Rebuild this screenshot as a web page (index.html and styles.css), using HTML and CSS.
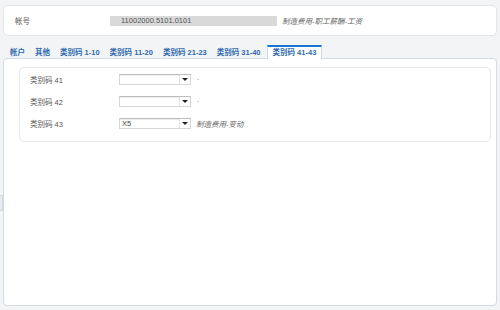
FILE: index.html
```html
<!DOCTYPE html>
<html lang="zh">
<head>
<meta charset="utf-8">
<title>帐号</title>
<link rel="stylesheet" href="styles.css">
</head>
<body>
<div class="page">
  <div class="card">
    <span class="card-label">帐号</span>
    <span class="ro-input">11002000.5101.0101</span>
    <span class="desc">制造费用-职工薪酬-工资</span>
  </div>

  <div class="tabs">
    <span class="tab">帐户</span>
    <span class="tab">其他</span>
    <span class="tab">类别码 1-10</span>
    <span class="tab">类别码 11-20</span>
    <span class="tab">类别码 21-23</span>
    <span class="tab">类别码 31-40</span>
    <span class="tab active">类别码 41-43</span>
  </div>

  <div class="panel">
    <div class="fieldset">
      <div class="row">
        <span class="row-label">类别码 41</span>
        <span class="select"><span class="select-val"></span><span class="select-btn"><span class="caret"></span></span></span>
        <span class="note">·</span>
      </div>
      <div class="row">
        <span class="row-label">类别码 42</span>
        <span class="select"><span class="select-val"></span><span class="select-btn"><span class="caret"></span></span></span>
        <span class="note">·</span>
      </div>
      <div class="row">
        <span class="row-label">类别码 43</span>
        <span class="select"><span class="select-val">X5</span><span class="select-btn"><span class="caret"></span></span></span>
        <span class="desc">制造费用-变动</span>
      </div>
    </div>
  </div>
  <span class="handle"></span>
</div>
</body>
</html>
```

FILE: styles.css
```css
html, body {
  margin: 0;
  padding: 0;
  background: #f3f4f6;
  font-family: "Liberation Sans", Arial, "Noto Sans CJK SC", sans-serif;
  font-size: 7.5px;
  color: #555;
}
.page {
  position: relative;
  width: 494px;
  height: 310px;
  padding: 5px 3px 0;
}
.card {
  box-sizing: border-box;
  height: 31px;
  background: #fff;
  border: 1px solid #e2e5ea;
  border-radius: 5px;
  display: flex;
  align-items: center;
  padding-left: 11px;
}
.card-label {
  width: 95px;
  color: #555;
}
.ro-input {
  box-sizing: border-box;
  width: 167px;
  height: 10px;
  line-height: 10px;
  background: #d9d9d9;
  padding-left: 11px;
  color: #555;
}
.desc {
  font-style: italic;
  color: #666;
  margin-left: 5px;
}
.tabs {
  display: flex;
  margin-top: 9px;
  padding-left: 2px;
  align-items: flex-end;
}
.tab {
  padding: 0 4px;
  height: 11px;
  line-height: 12px;
  font-weight: bold;
  color: #2f6aae;
  border: 1px solid transparent;
  border-top-width: 2px;
  border-bottom: 0;
  white-space: nowrap;
}
.tab.active {
  padding: 0 5px;
  background: #fff;
  border-color: #cfd8e4;
  border-top-color: #1777d6;
  position: relative;
  z-index: 1;
  margin-bottom: -1px;
  height: 12px;
  margin-left: 1px;
}
.panel {
  box-sizing: border-box;
  height: 248px;
  background: #fff;
  border: 1px solid #d3dbe6;
  border-radius: 4px;
  padding: 8px 5px 0 15px;
}
.fieldset {
  border: 1px solid #e4e6ea;
  border-radius: 5px;
  padding: 0 10px 7px;
}
.row {
  display: flex;
  align-items: center;
  height: 22px;
}
.row-label {
  width: 89px;
  color: #555;
}
.select {
  box-sizing: border-box;
  display: flex;
  width: 72px;
  height: 11px;
  border: 1px solid #d6d6d6;
  border-top-color: #bdbdbd;
  background: #fff;
}
.select-val {
  flex: 1;
  line-height: 9px;
  padding-left: 2px;
  color: #444;
  box-shadow: inset 0 1px 1px rgba(0,0,0,0.08);
}
.select-btn {
  width: 10px;
  border-left: 1px solid #e2e2e2;
  display: flex;
  align-items: center;
  justify-content: center;
}
.caret {
  width: 0;
  height: 0;
  border-left: 3px solid transparent;
  border-right: 3px solid transparent;
  border-top: 3px solid #222;
}
.note {
  margin-left: 6px;
  color: #777;
}
.handle {
  position: absolute;
  left: 0;
  top: 195px;
  width: 2px;
  height: 14px;
  background: #e8eaee;
  border: 1px solid #d3d7dd;
  border-left: 0;
}
```
